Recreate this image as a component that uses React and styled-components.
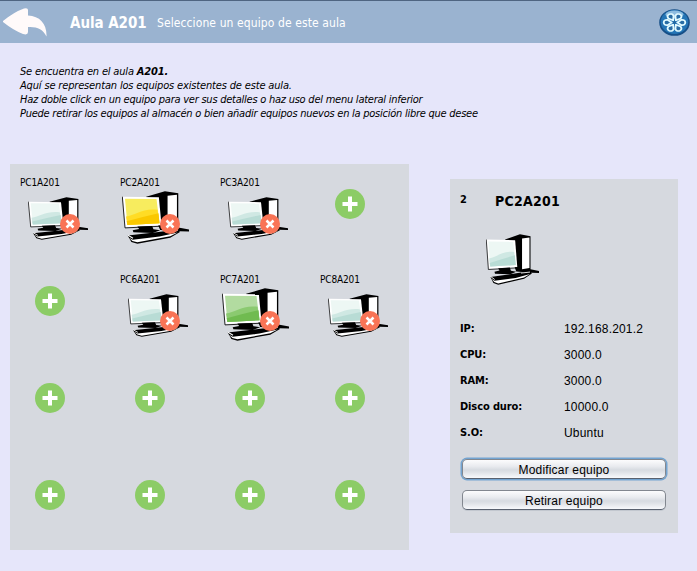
import React from "react";
import styled, { createGlobalStyle } from "styled-components";

const GlobalStyle = createGlobalStyle`
  * { box-sizing: border-box; }
  html, body { margin: 0; padding: 0; }
  body { background: #e6e6fa; overflow: hidden; }
`;

const tahoma = `"DejaVu Sans Condensed", "DejaVu Sans", sans-serif`;

const Window = styled.div`
  width: 697px;
  height: 571px;
  background: #e6e6fa;
  color: #000;
  font-family: ${tahoma};
  font-stretch: condensed;
`;

const Header = styled.header`
  height: 43px;
  display: flex;
  align-items: center;
  padding: 1px 7px 0 3px;
  background: #9ab3d0;
  border-top: 1px solid #4f6581;
`;

const Title = styled.h1`
  margin: 1px 0 0 23px;
  width: 87px;
  font-size: 15px;
  line-height: 20px;
  font-weight: bold;
  color: #fff;
  white-space: nowrap;
  letter-spacing: ${(p) => p.$track}px;
`;

const Subtitle = styled.span`
  margin-top: 0;
  flex: 1;
  font-size: 12px;
  line-height: 20px;
  color: #fff;
  white-space: nowrap;
  letter-spacing: ${(p) => p.$track}px;
`;

const Intro = styled.section`
  height: 121px;
  padding: 22px 0 0 20px;
`;

const IntroLine = styled.p`
  margin: 0;
  font-size: 11px;
  line-height: 14px;
  font-style: italic;
  white-space: nowrap;
  letter-spacing: ${(p) => p.$track}px;
`;

const Content = styled.main`
  display: flex;
  align-items: flex-start;
  padding-left: 10px;
  gap: 41px;
`;

const Room = styled.section`
  width: 399px;
  height: 386px;
  display: grid;
  grid-template-columns: repeat(4, 100px);
  grid-auto-rows: 97px;
  background: #d6d9df;
`;

const Slot = styled.div`
  position: relative;
  height: 97px;
`;

const EmptySlot = styled.div`
  padding: 25px 0 0 25px;
  height: 97px;
`;

const SlotName = styled.div`
  padding: 12px 0 0 10px;
  height: ${(p) => (p.$large ? 27 : 33)}px;
  font-size: 10px;
  line-height: 13px;
  white-space: nowrap;
  letter-spacing: -0.15px;
`;

const Drawing = styled.svg`
  display: block;
  flex: none;
  margin-left: ${(p) => p.$left || 0}px;
`;

const RemoveBadge = styled.svg`
  position: absolute;
  left: 50px;
  top: 50px;
`;

const Details = styled.aside`
  width: 228px;
  height: 354px;
  margin-top: 15px;
  padding: 13px 12px 0 12px;
  background: #d6d9df;
`;

const DetailsHead = styled.div`
  display: flex;
  height: 42px;
`;

const Position = styled.span`
  width: 35px;
  margin-left: -2px;
  padding-top: 1px;
  font-size: 11px;
  line-height: 14px;
  font-weight: bold;
`;

const MachineName = styled.h2`
  margin: 0;
  font-size: 14px;
  line-height: 19px;
  font-weight: bold;
  letter-spacing: ${(p) => p.$track}px;
`;

const Specs = styled.dl`
  display: grid;
  grid-template-columns: 104px 1fr;
  grid-auto-rows: 26px;
  align-items: center;
  margin: 30px 0 14px -2px;
`;

const Term = styled.dt`
  font-size: 11px;
  font-weight: bold;
  white-space: nowrap;
  letter-spacing: ${(p) => p.$track}px;
`;

const Value = styled.dd`
  margin: 2px 0 0;
  font: 12px "Liberation Sans", Arial, sans-serif;
  letter-spacing: 0.18px;
`;

const Button = styled.button`
  display: block;
  width: 204px;
  height: 20px;
  margin: 0 0 11px;
  padding: 1px 0 0;
  border: 1px solid #82878f;
  border-bottom-color: #59616f;
  border-radius: 5px;
  background: linear-gradient(#fcfcfd 0%, #e9ebef 35%, #d7dbe1 55%, #dfe2e7 68%, #f8f9fc 100%);
  box-shadow: ${(p) => (p.$focused ? "0 0 0 1.5px #73a4d1" : "0 1px 0 #c2c7cf")};
  color: #000;
  font: 12px/16px "Liberation Sans", Arial, sans-serif;
  letter-spacing: 0.18px;
`;

const screens = {
  teal: ["#edf7f4", "#cfe8e3", "#b8dcd5"],
  yellow: ["#f7ec5e", "#ffdc25", "#fac800"],
  green: ["#b2dba0", "#8bca70", "#70bb50"],
};

function Computer({ screen, width, height, left }) {
  const [light, mid, deep] = screens[screen];
  return (
    <Drawing $left={left} width={width} height={height} viewBox="36 78 200 158" preserveAspectRatio="none">
      <path d="M108 95 L164 79 L204 85 V187 L236 193 V199 L207 198 L150 194 Z" fill="#000" />
      <path d="M172 92 L200 89 V183 L172 187 Z" fill="#fff" />
      <path d="M38 95 L146 97 L154 180 L46 186 Z" fill="#fff" />
      <path d="M37 95 L45 188 L153 183" fill="none" stroke="#000" strokeWidth="2.5" />
      <path d="M45 101 L139 102 L148 174 L52 179 Z" fill={light} />
      <path d="M48 154 C74 151 98 128 142 134 L148 174 L52 179 Z" fill={mid} />
      <path d="M50 168 Q92 156 145 144 L148 174 L52 179 Z" fill={deep} />
      <path d="M82 184 L126 182 L130 192 L150 195 L128 203 L70 201 L68 195 L87 191 Z" fill="#000" />
      <path d="M53 211 L139 201 L203 193 L209 200 L180 217 L82 235 L64 230 Z" fill="#000" />
      <path d="M57 217 L68 223 L148 214 L202 202 L180 213 L82 231 L67 227 Z" fill="#fff" />
      <path d="M54 210 L69 219 M168 199 L202 196" fill="none" stroke="#fff" strokeWidth="3" />
    </Drawing>
  );
}

function AddIcon() {
  return (
    <Drawing width="30" height="30" viewBox="0 0 30 30">
      <circle cx="15" cy="15" r="15" fill="#8ccc66" />
      <path d="M15 7.5 V22.5 M7.5 15 H22.5" stroke="#fff" strokeWidth="4" />
    </Drawing>
  );
}

function RemoveIcon() {
  return (
    <RemoveBadge width="20" height="20" viewBox="0 0 20 20">
      <circle cx="10" cy="10" r="10" fill="#f97456" />
      <path d="M6.5 6.5 L13.5 13.5 M13.5 6.5 L6.5 13.5" stroke="#fff" strokeWidth="2.5" />
    </RemoveBadge>
  );
}

function BackArrow() {
  return (
    <Drawing width="44" height="29" viewBox="0 0 44 29">
      <path d="M0 13 Q11 4 21 0.5 Q25 -0.5 25 2 V7.5 C37 8 44 16 43.5 28.5 C40 21 34 18.5 25 19 V24 Q25 27.5 20 26 Q10 22 0 14 Z" fill="#fffafa" />
    </Drawing>
  );
}

function Emblem() {
  const petals = [30, 90, 150, 210, 270, 330];
  return (
    <Drawing width="31" height="27" viewBox="0 0 31 27">
      <ellipse cx="15.5" cy="13.5" rx="15.3" ry="13.3" fill="#164f87" />
      <ellipse cx="15.5" cy="13" rx="13.8" ry="11.9" fill="#2475b5" />
      <ellipse cx="15.5" cy="5.5" rx="9" ry="4" fill="#8dbde0" />
      <g transform="translate(15.5 13.5) scale(1.1 .96)" fill="#286da5" stroke="#e2fbff" strokeWidth="1.7">
        {petals.map((angle) => (
          <path key={angle} transform={`rotate(${angle})`} d="M0 -2.6 L-2.7 -6.3 Q-3 -9.6 0 -9.8 Q3 -9.6 2.7 -6.3 Z" />
        ))}
      </g>
      <circle cx="15.5" cy="13.5" r="1.7" fill="#1d68a3" />
    </Drawing>
  );
}

const slots = [
  { name: "PC1A201", screen: "teal" },
  { name: "PC2A201", screen: "yellow" },
  { name: "PC3A201", screen: "teal" },
  null,
  null,
  { name: "PC6A201", screen: "teal" },
  { name: "PC7A201", screen: "green" },
  { name: "PC8A201", screen: "teal" },
  null, null, null, null,
  null, null, null, null,
];

const specs = [
  ["IP:", "192.168.201.2"],
  ["CPU:", "3000.0"],
  ["RAM:", "3000.0"],
  ["Disco duro:", "10000.0"],
  ["S.O:", "Ubuntu"],
];

function RoomSlot({ machine }) {
  if (!machine) {
    return (
      <EmptySlot>
        <AddIcon />
      </EmptySlot>
    );
  }
  const large = machine.screen !== "teal";
  return (
    <Slot>
      <SlotName $large={large}>{machine.name}</SlotName>
      <Computer
        screen={machine.screen}
        left={large ? 12 : 18}
        width={large ? 67 : 60}
        height={large ? 53 : 43}
      />
      <RemoveIcon />
    </Slot>
  );
}

export default function App() {
  return (
    <Window>
      <GlobalStyle />
      <Header>
        <BackArrow />
        <Title $track={-0.05}>Aula A201</Title>
        <Subtitle $track={0.1}>Seleccione un equipo de este aula</Subtitle>
        <Emblem />
      </Header>
      <Intro>
        <IntroLine $track={-0.17}>Se encuentra en el aula <b>A201.</b></IntroLine>
        <IntroLine $track={-0.16}>Aquí se representan los equipos existentes de este aula.</IntroLine>
        <IntroLine $track={-0.24}>Haz doble click en un equipo para ver sus detalles o haz uso del menu lateral inferior</IntroLine>
        <IntroLine $track={-0.25}>Puede retirar los equipos al almacén o bien añadir equipos nuevos en la posición libre que desee</IntroLine>
      </Intro>
      <Content>
        <Room>
          {slots.map((machine, i) => (
            <RoomSlot key={i} machine={machine} />
          ))}
        </Room>
        <Details>
          <DetailsHead>
            <Position>2</Position>
            <MachineName $track={0.25}>PC2A201</MachineName>
          </DetailsHead>
          <Computer screen="teal" left={24} width={53} height={51} />
          <Specs>
            {specs.map(([term, value]) => (
              <React.Fragment key={term}>
                <Term $track={-0.12}>{term}</Term>
                <Value>{value}</Value>
              </React.Fragment>
            ))}
          </Specs>
          <Button $focused>Modificar equipo</Button>
          <Button>Retirar equipo</Button>
        </Details>
      </Content>
    </Window>
  );
}
